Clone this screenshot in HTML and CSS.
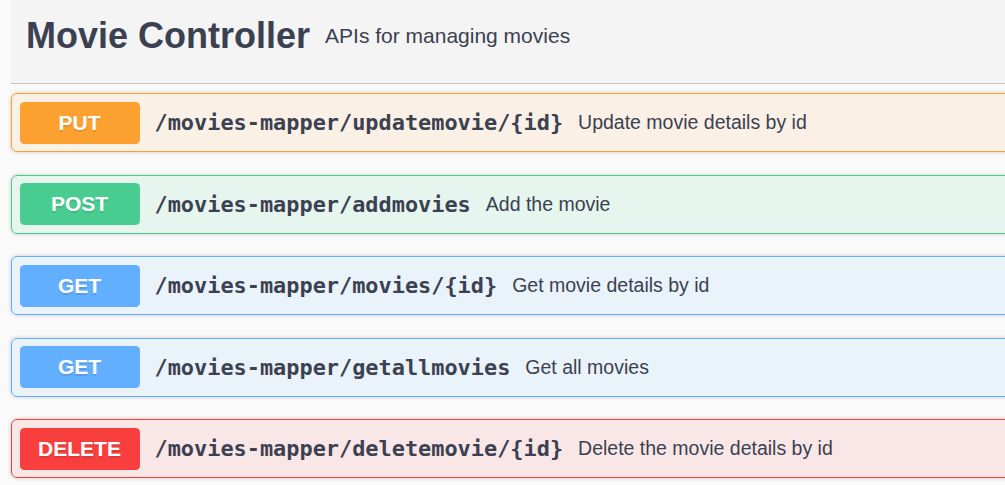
FILE: index.html
```html
<!DOCTYPE html>
<html lang="en">
<head>
<meta charset="utf-8">
<title>Movie Controller</title>
<link rel="stylesheet" href="styles.css">
</head>
<body>
<div class="wrapper">
  <section class="tag-section">
    <h3 class="tag">
      <span class="tag-name">Movie Controller</span>
      <small class="tag-desc">APIs for managing movies</small>
    </h3>
    <div class="opblock opblock-put">
      <div class="summary">
        <span class="method">PUT</span>
        <span class="path">/movies-mapper/updatemovie/{id}</span>
        <span class="desc">Update movie details by id</span>
      </div>
    </div>
    <div class="opblock opblock-post">
      <div class="summary">
        <span class="method">POST</span>
        <span class="path">/movies-mapper/addmovies</span>
        <span class="desc">Add the movie</span>
      </div>
    </div>
    <div class="opblock opblock-get">
      <div class="summary">
        <span class="method">GET</span>
        <span class="path">/movies-mapper/movies/{id}</span>
        <span class="desc">Get movie details by id</span>
      </div>
    </div>
    <div class="opblock opblock-get">
      <div class="summary">
        <span class="method">GET</span>
        <span class="path">/movies-mapper/getallmovies</span>
        <span class="desc">Get all movies</span>
      </div>
    </div>
    <div class="opblock opblock-delete">
      <div class="summary">
        <span class="method">DELETE</span>
        <span class="path">/movies-mapper/deletemovie/{id}</span>
        <span class="desc">Delete the movie details by id</span>
      </div>
    </div>
  </section>
</div>
</body>
</html>
```
FILE: styles.css
```css
html, body {
  margin: 0;
  padding: 0;
  background: #fafafa;
  overflow: hidden;
}

body {
  font-family: "Liberation Sans", Arial, sans-serif;
  color: #3b4151;
}

.wrapper {
  width: 1200px;
  padding-left: 11px;
}

.tag {
  margin: 0 0 9px 0;
  height: 83px;
  box-sizing: content-box;
  padding: 15px 30px 0 15px;
  box-sizing: border-box;
  height: 84px;
  background: #f4f4f4;
  border-bottom: 1px solid #c4c5c9;
  display: flex;
  align-items: flex-start;
}

.tag-name {
  font-size: 36px;
  font-weight: 700;
  line-height: 41px;
  display: flex;
  align-items: center;
}

.tag-desc {
  font-size: 21px;
  font-weight: 400;
  line-height: 24px;
  padding: 0 15px;
  margin-top: 8.5px;
}

.opblock {
  margin: 0 0 22.5px 0;
  border: 1px solid;
  border-radius: 6px;
  box-shadow: 0 0 4.5px rgba(0, 0, 0, 0.19);
}

.summary {
  display: flex;
  align-items: center;
  padding: 7.5px;
}

.method {
  min-width: 120px;
  height: 42px;
  box-sizing: border-box;
  display: flex;
  align-items: center;
  justify-content: center;
  border-radius: 4.5px;
  color: #fff;
  font-size: 21px;
  font-weight: 700;
  text-shadow: 0 1.5px 0 rgba(0, 0, 0, 0.1);
}

.path {
  font-family: "DejaVu Sans Mono", "Liberation Mono", monospace;
  font-weight: 700;
  font-size: 21.9px;
  padding: 0 15px;
  color: #3b4151;
}

.desc {
  font-size: 19.5px;
  color: #3b4151;
}

.opblock-put {
  background: rgba(252, 161, 48, 0.1);
  border-color: #fca130;
}
.opblock-put .method { background: #fca130; }

.opblock-post {
  background: rgba(73, 204, 144, 0.1);
  border-color: #49cc90;
}
.opblock-post .method { background: #49cc90; }

.opblock-get {
  background: rgba(97, 175, 254, 0.1);
  border-color: #61affe;
}
.opblock-get .method { background: #61affe; }

.opblock-delete {
  background: rgba(249, 62, 62, 0.1);
  border-color: #f93e3e;
}
.opblock-delete .method { background: #f93e3e; }
```
